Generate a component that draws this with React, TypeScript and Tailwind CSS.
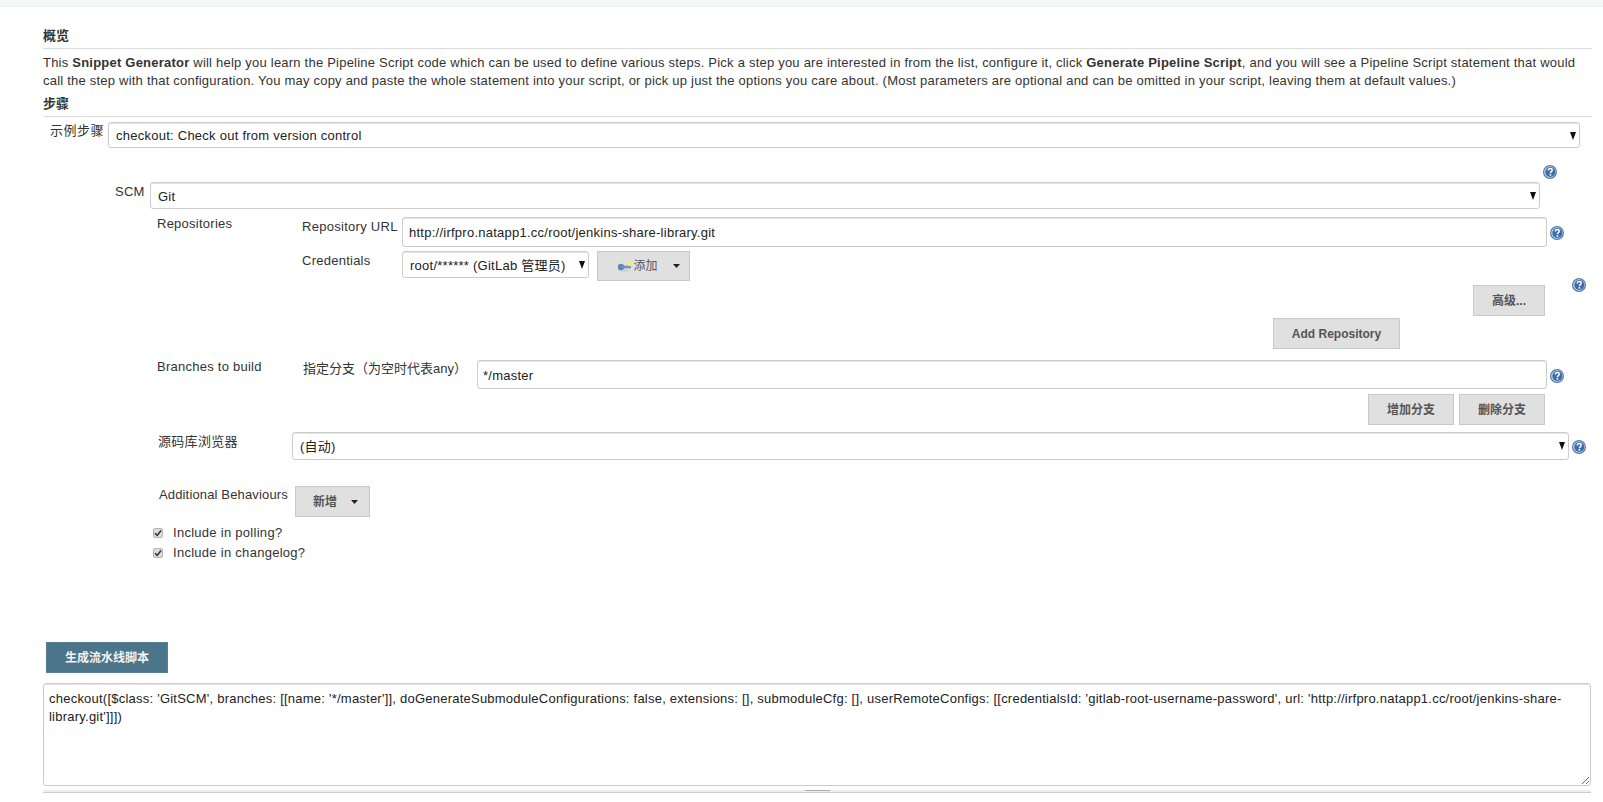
import React from 'react';

const SCRIPT_TEXT =
  "checkout([$class: 'GitSCM', branches: [[name: '*/master']], doGenerateSubmoduleConfigurations: false, extensions: [], submoduleCfg: [], userRemoteConfigs: [[credentialsId: 'gitlab-root-username-password', url: 'http://irfpro.natapp1.cc/root/jenkins-share-library.git']]])";

const Help: React.FC<{ className?: string }> = ({ className }) => (
  <svg width="14" height="14" viewBox="0 0 14 14" className={`shrink-0 ${className ?? ''}`}>
    <circle cx="7" cy="7" r="7" fill="#4f7cb3" />
    <circle cx="7" cy="7" r="5.8" fill="#c9d9ea" />
    <circle cx="7.3" cy="7" r="5" fill="#3c6ca6" />
    <path d="M5.3 5.5C5.4 4.2 6.2 3.5 7.3 3.5C8.5 3.5 9.2 4.3 9.2 5.2C9.2 6.6 7.5 6.6 7.4 8.2" fill="none" stroke="#fff" strokeWidth="1.5" />
    <rect x="6.6" y="9.1" width="1.6" height="1.6" fill="#fff" />
  </svg>
);

const Caret = () => (
  <svg width="7" height="4" viewBox="0 0 7 4" className="shrink-0">
    <path d="M0 0H7L3.5 4Z" fill="#222" />
  </svg>
);

const Select: React.FC<{ value: string; className?: string; height: string }> = ({ value, className, height }) => (
  <div className={`relative ${height} ${className ?? ''}`}>
    <select
      defaultValue={value}
      className="h-full w-full appearance-none rounded-[3px] border border-[#ccc] bg-white pl-[7px] pr-[20px] pt-[2px] text-[13px] tracking-[0.25px] text-[#222] shadow-[inset_0_1px_0_#e4e4e4] outline-none"
    >
      <option>{value}</option>
    </select>
    <svg width="6" height="8" viewBox="0 0 6 8" className="pointer-events-none absolute right-[4px] top-[10px]">
      <path d="M0 0H6L3 8Z" fill="#111" />
    </svg>
  </div>
);

const TextInput: React.FC<{ value: string; className?: string }> = ({ value, className }) => (
  <input
    readOnly
    defaultValue={value}
    className={`rounded-[3px] border border-[#ccc] bg-white px-[5px] text-[13px] tracking-[0.25px] text-[#222] shadow-[inset_0_1px_0_#e4e4e4] outline-none ${className ?? ''}`}
  />
);

const GrayButton: React.FC<{ className?: string; children: React.ReactNode }> = ({ className, children }) => (
  <button className={`flex items-center justify-center border border-[#c8c8c8] bg-[#e0e0e0] text-[12px] font-bold text-[#555] ${className ?? ''}`}>
    {children}
  </button>
);

const KeyIcon = () => (
  <svg width="17" height="14" viewBox="0 0 17 14" className="shrink-0">
    <ellipse cx="8" cy="11.5" rx="6" ry="1.4" fill="#d2d2d2" />
    <circle cx="5" cy="8" r="3.2" fill="#5f86b8" />
    <rect x="6" y="6.6" width="9" height="2.8" fill="#6f92c0" />
    <circle cx="13.5" cy="4.6" r="2.6" fill="#f4e86a" />
  </svg>
);

const CheckRow: React.FC<{ label: string }> = ({ label }) => (
  <div className="flex h-[20px] items-center pl-[110px]">
    <span className="flex h-[10px] w-[10px] items-center justify-center rounded-[2px] border border-[#b5b5b5] bg-[#dcdcdc]">
      <svg width="8" height="8" viewBox="0 0 8 8">
        <path d="M1 4.2L3.2 6.4L7 1.4" fill="none" stroke="#333" strokeWidth="1.6" />
      </svg>
    </span>
    <span className="ml-[10px] text-[13px] tracking-[0.28px] text-[#333]">{label}</span>
  </div>
);

const SectionTitle: React.FC<{ children: React.ReactNode; className?: string }> = ({ children, className }) => (
  <div className={`flex items-end border-b border-[#ddd] pb-[3px] text-[13px] font-bold leading-[18px] text-[#333] ${className ?? ''}`}>
    {children}
  </div>
);

export default function App() {
  return (
    <div className="h-[802px] overflow-hidden bg-white font-['Liberation_Sans','Noto_Sans_CJK_SC',sans-serif] text-[13px] text-[#333]">
      {/* Top strip */}
      <div className="h-[7px] border-b border-[#e9eeee] bg-[#f6f6f6]" />

      <main className="pl-[43px] pr-[11px]">
        <SectionTitle className="h-[42px]">概览</SectionTitle>
        <p className="mt-[5px] leading-[18px] tracking-[0.22px]">
          This <b>Snippet Generator</b> will help you learn the Pipeline Script code which can be used to define various steps. Pick a step you are interested in from the list, configure it, click <b>Generate Pipeline Script</b>, and you will see a Pipeline Script statement that would call the step with that configuration. You may copy and paste the whole statement into your script, or pick up just the options you care about. (Most parameters are optional and can be omitted in your script, leaving them at default values.)
        </p>
        <SectionTitle className="h-[27px]">步骤</SectionTitle>

        {/* Sample step */}
        <div className="mt-[5px] flex pr-[12px]">
          <span className="w-[65px] shrink-0 pl-[7px] leading-[18px] tracking-[0.5px]">示例步骤</span>
          <Select value="checkout: Check out from version control" height="h-[26px]" className="flex-1" />
        </div>

        <div className="mt-[17px] flex justify-end pr-[35px]">
          <Help />
        </div>

        {/* SCM */}
        <div className="mt-[3px] flex pl-[72px] pr-[52px]">
          <span className="w-[35px] shrink-0 pt-[1px] leading-[18px] tracking-[0.25px]">SCM</span>
          <Select value="Git" height="h-[27px]" className="flex-1" />
        </div>

        {/* Repositories */}
        <div className="mt-[8px] flex pl-[114px] pr-[28px]">
          <span className="w-[145px] shrink-0 leading-[14px] tracking-[0.25px]">Repositories</span>
          <div className="min-w-0 flex-1">
            <div className="flex">
              <span className="w-[100px] shrink-0 pt-[2px] leading-[16px] tracking-[0.28px]">Repository URL</span>
              <TextInput value="http://irfpro.natapp1.cc/root/jenkins-share-library.git" className="h-[30px] min-w-0 flex-1 pl-[6px]" />
              <Help className="ml-[3px] mt-[9px]" />
            </div>
            <div className="mt-[4px] flex">
              <span className="w-[100px] shrink-0 pt-[2px] leading-[16px] tracking-[0.25px]">Credentials</span>
              <Select value="root/****** (GitLab 管理员)" height="h-[27px]" className="w-[187px]" />
              <GrayButton className="ml-[8px] h-[30px] w-[93px] pl-[17px]">
                <KeyIcon />
                <span className="font-normal">添加</span>
                <span className="ml-[15px] mr-[8px]">
                  <Caret />
                </span>
              </GrayButton>
            </div>
          </div>
        </div>

        <div className="mt-[4px] flex items-start justify-end pr-[6px]">
          <GrayButton className="h-[31px] w-[72px]">高级...</GrayButton>
          <Help className="ml-[27px] -mt-[7px]" />
        </div>

        <div className="mt-[2px] flex justify-end pr-[192px]">
          <GrayButton className="h-[31px] w-[127px]">Add Repository</GrayButton>
        </div>

        {/* Branches */}
        <div className="mt-[11px] flex pl-[114px] pr-[28px]">
          <span className="w-[146px] shrink-0 leading-[14px] tracking-[0.25px]">Branches to build</span>
          <span className="w-[174px] shrink-0 pt-[2px] leading-[14px]">指定分支（为空时代表any）</span>
          <TextInput value="*/master" className="h-[29px] min-w-0 flex-1 pt-[2px]" />
          <Help className="ml-[3px] mt-[9px]" />
        </div>

        <div className="mt-[5px] flex justify-end gap-[5px] pr-[47px]">
          <GrayButton className="h-[31px] w-[86px]">增加分支</GrayButton>
          <GrayButton className="h-[31px] w-[86px]">删除分支</GrayButton>
        </div>

        {/* Repository browser */}
        <div className="mt-[7px] flex pl-[115px] pr-[6px]">
          <span className="w-[134px] shrink-0 leading-[20px] tracking-[0.3px]">源码库浏览器</span>
          <Select value="(自动)" height="h-[28px]" className="flex-1" />
          <Help className="ml-[3px] mt-[8px]" />
        </div>

        {/* Additional behaviours */}
        <div className="mt-[26px] flex pl-[116px]">
          <span className="w-[136px] shrink-0 leading-[18px] tracking-[0.15px]">Additional Behaviours</span>
          <GrayButton className="h-[31px] w-[75px] gap-[14px] pl-[6px]">
            <span>新增</span>
            <Caret />
          </GrayButton>
        </div>

        <div className="mt-[6px]">
          <CheckRow label="Include in polling?" />
          <CheckRow label="Include in changelog?" />
        </div>

        <button className="ml-[3px] mt-[79px] block h-[31px] w-[122px] border border-[#5a7f92] bg-[#4b758b] text-[12px] font-bold text-[#f2f2f2]">
          生成流水线脚本
        </button>

        <textarea
          readOnly
          defaultValue={SCRIPT_TEXT}
          className="mt-[10px] block h-[103px] w-[1548px] rounded-[3px] border border-[#ccc] bg-white px-[5px] pt-[6px] text-[13px] leading-[18px] tracking-[0.23px] text-[#222] shadow-[inset_0_1px_0_#e4e4e4] outline-none"
        />

        {/* Collapsed pane divider */}
        <div className="mt-[4px] flex h-[3px] w-[1548px] justify-center border-b border-[#ccc] bg-[#eee]">
          <span className="h-px w-[25px] bg-[#aaa]" />
        </div>
      </main>
    </div>
  );
}
